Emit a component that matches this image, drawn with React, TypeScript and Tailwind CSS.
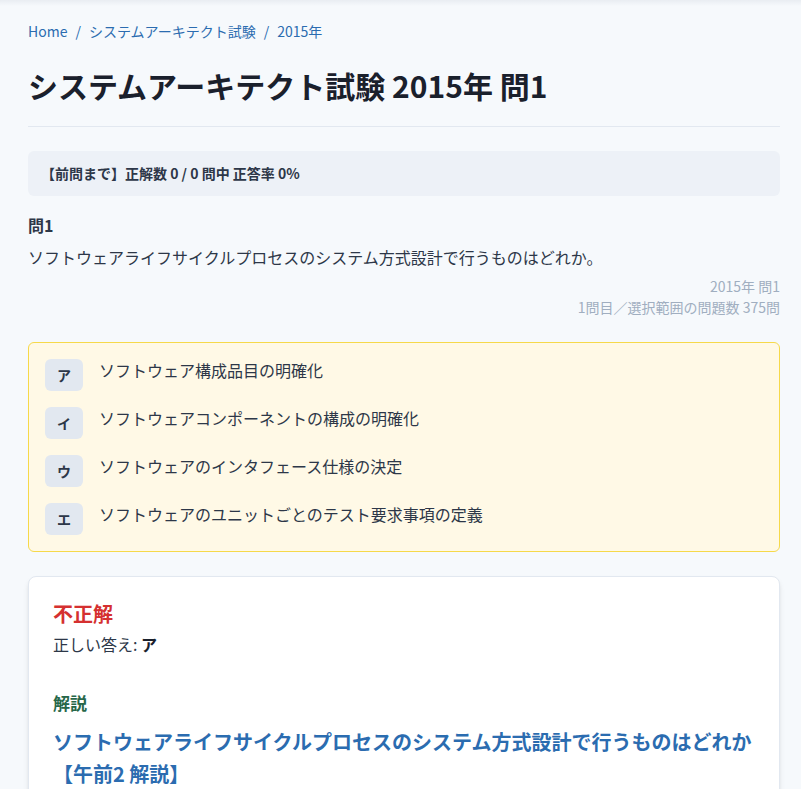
import React from "react";

const choices = [
  ["ア", "ソフトウェア構成品目の明確化"],
  ["イ", "ソフトウェアコンポーネントの構成の明確化"],
  ["ウ", "ソフトウェアのインタフェース仕様の決定"],
  ["エ", "ソフトウェアのユニットごとのテスト要求事項の定義"],
];

export default function App() {
  return (
    <div
      className="min-h-[789px] bg-[#f6f9fc] text-[#1a202c]"
      style={{ fontFamily: '"Noto Sans CJK JP", "Noto Sans", sans-serif' }}
    >
      <div className="h-[6px] bg-gradient-to-b from-[#e9edf2] to-[#f6f9fc]" />
      <div className="pl-[28px] pr-[21px] pt-[15px]">
        <nav className="flex items-center gap-[8px] text-[14px] leading-[20px] text-[#2b6cb0]">
          <span>Home</span>
          <span>/</span>
          <span>システムアーキテクト試験</span>
          <span>/</span>
          <span>2015年</span>
        </nav>
        <h1 className="mt-[22px] pb-[19px] border-b border-[#e2e8f0] text-[30px] leading-[44px] font-bold text-[#1a202c]">
          システムアーキテクト試験 2015年 問1
        </h1>
        <div className="mt-[24px] rounded-[6px] bg-[#edf1f7] px-[13px] py-[12px] text-[14px] leading-[21px] font-bold text-[#2d3748]">
          【前問まで】正解数 0 / 0 問中 正答率 0%
        </div>
        <div className="mt-[16px] text-[16px] leading-[26px] font-bold text-[#2d3748]">問1</div>
        <p className="mt-[6px] text-[16px] leading-[26px] text-[#2d3748]">
          ソフトウェアライフサイクルプロセスのシステム方式設計で行うものはどれか。
        </p>
        <div className="mt-[6px] text-right text-[14px] leading-[21px] text-[#a0aec0]">
          <div>2015年 問1</div>
          <div>1問目／選択範囲の問題数 375問</div>
        </div>
        <div className="mt-[24px] rounded-[6px] border border-[#f6d94a] bg-[#fff9e6] px-[16px] pt-[16px] pb-[0px]">
          {choices.map(([k, t]) => (
            <div key={k} className="flex items-start gap-[16px] h-[48px]">
              <div className="w-[38px] h-[32px] shrink-0 rounded-[6px] bg-[#e2e8f0] flex items-center justify-center text-[14px] font-bold text-[#2d3748]">
                {k}
              </div>
              <div className="text-[16px] leading-[26px] text-[#2d3748] -mt-[2px]">{t}</div>
            </div>
          ))}
        </div>
        <div className="mt-[24px] rounded-[8px] border border-[#e2e8f0] bg-white shadow-md px-[24px] pt-[22px] pb-[24px]">
          <div className="text-[20px] leading-[30px] font-bold text-[#d53030]">不正解</div>
          <div className="mt-[2px] text-[16px] leading-[26px] text-[#2d3748]">
            正しい答え: <span className="font-bold text-[#1a202c]">ア</span>
          </div>
          <div className="mt-[33px] text-[17px] leading-[26px] font-bold text-[#276749]">解説</div>
          <div className="mt-[10px] text-[20px] leading-[32px] font-bold text-[#2b6cb0]">
            ソフトウェアライフサイクルプロセスのシステム方式設計で行うものはどれか【午前2 解説】
          </div>
        </div>
      </div>
    </div>
  );
}
